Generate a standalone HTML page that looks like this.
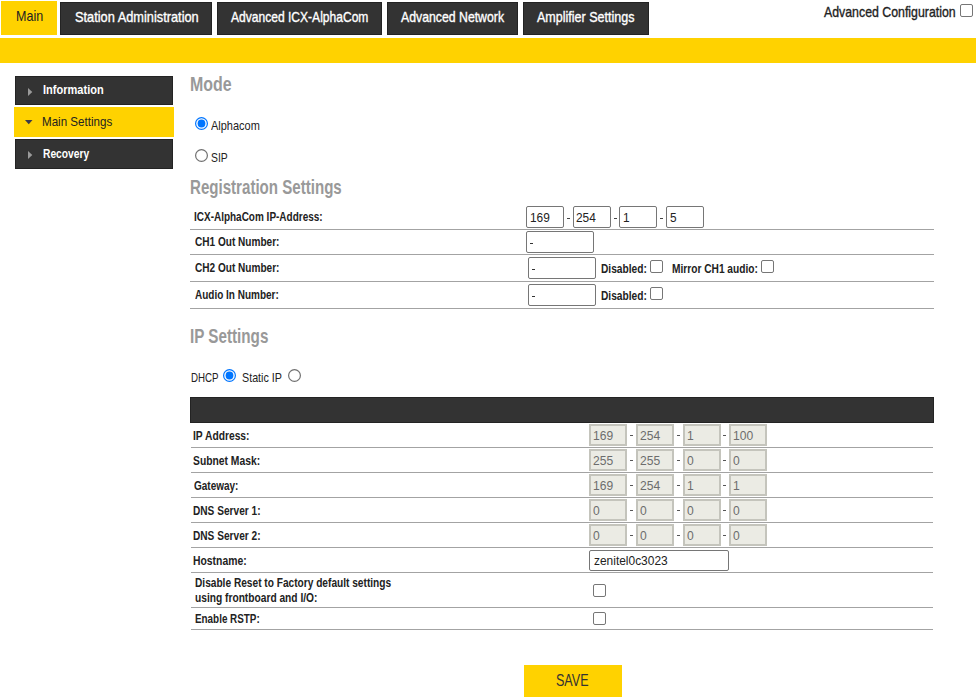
<!DOCTYPE html>
<html><head><meta charset="utf-8"><title>Main Settings</title>
<style>
*{box-sizing:border-box}
html,body{margin:0;padding:0;background:#fff;width:976px;height:700px;overflow:hidden;position:relative;font-family:"Liberation Sans",sans-serif;color:#222}
.a{position:absolute}
.t{position:absolute;white-space:nowrap;transform-origin:0 0;line-height:1;font-family:"Liberation Sans",sans-serif}
.inp{position:absolute;height:22px;border:1px solid #767676;border-radius:2px;background:#fff}
.dis{position:absolute;width:38px;height:22px;border:2px solid #c4c4bc;background:#ebebe4}
.cb{position:absolute;width:13px;height:13px;border:1px solid #767676;border-radius:2px;background:#fff}
</style></head><body>
<div class="a" style="left:1px;top:1px;width:56px;height:34px;background:#ffd200"></div>
<div class="a" style="left:60px;top:2px;width:152px;height:33px;background:#333;border:1px solid #232323"></div>
<div class="a" style="left:217px;top:2px;width:165px;height:33px;background:#333;border:1px solid #232323"></div>
<div class="a" style="left:387px;top:2px;width:131px;height:33px;background:#333;border:1px solid #232323"></div>
<div class="a" style="left:523px;top:2px;width:126px;height:33px;background:#333;border:1px solid #232323"></div>
<div id="t_main" class="t" style="left:15.54px;top:9.0px;font-size:14.5px;font-weight:400;color:#222;transform:scaleX(0.8633);">Main</div>
<div id="t_sa" class="t" style="left:74.5px;top:10.0px;font-size:14.5px;font-weight:400;color:#fff;-webkit-text-stroke:0.35px #fff;transform:scaleX(0.8821);">Station Administration</div>
<div id="t_icx" class="t" style="left:231.1px;top:9.8px;font-size:14.5px;font-weight:400;color:#fff;-webkit-text-stroke:0.35px #fff;transform:scaleX(0.8315);">Advanced ICX-AlphaCom</div>
<div id="t_net" class="t" style="left:401.1px;top:9.7px;font-size:14.5px;font-weight:400;color:#fff;-webkit-text-stroke:0.35px #fff;transform:scaleX(0.8467);">Advanced Network</div>
<div id="t_amp" class="t" style="left:537.4px;top:9.7px;font-size:14.5px;font-weight:400;color:#fff;-webkit-text-stroke:0.35px #fff;transform:scaleX(0.8646);">Amplifier Settings</div>
<div id="t_cfg" class="t" style="left:824.2px;top:4.8px;font-size:14.5px;font-weight:400;color:#222;-webkit-text-stroke:0.35px #222;transform:scaleX(0.8506);">Advanced Configuration</div>
<div class="cb" style="left:960px;top:4px"></div>
<div class="a" style="left:0px;top:38px;width:976px;height:25px;background:#ffd200"></div>
<div class="a" style="left:15px;top:76px;width:158px;height:29px;background:#333;border:1px solid #232323"></div>
<div class="a" style="left:14px;top:107px;width:160px;height:30px;background:#ffd200"></div>
<div class="a" style="left:15px;top:139px;width:158px;height:30px;background:#333;border:1px solid #232323"></div>
<svg class="a" style="left:27px;top:86.5px" width="7" height="10"><path d="M1 1 L5.3 5 L1 9 Z" fill="#9a9a9a"/></svg>
<svg class="a" style="left:27px;top:149.5px" width="7" height="10"><path d="M1 1 L5.3 5 L1 9 Z" fill="#9a9a9a"/></svg>
<svg class="a" style="left:24px;top:119px" width="10" height="7"><path d="M1 1 L8.5 1 L4.75 5.3 Z" fill="#3b3b4a"/></svg>
<div id="s_info" class="t" style="left:42.84px;top:84.0px;font-size:12.8px;font-weight:700;color:#fff;transform:scaleX(0.8623);">Information</div>
<div id="s_main" class="t" style="left:42.39px;top:115.7px;font-size:12.8px;font-weight:400;color:#222;transform:scaleX(0.9066);">Main Settings</div>
<div id="s_rec" class="t" style="left:43.1px;top:147.8px;font-size:12.8px;font-weight:700;color:#fff;transform:scaleX(0.8018);">Recovery</div>
<div id="h_mode" class="t" style="left:189.9px;top:75.2px;font-size:19.9px;font-weight:700;color:#999;transform:scaleX(0.802);">Mode</div>
<svg class="a" style="left:195px;top:117px" width="13" height="13" viewBox="0 0 13 13"><circle cx="6.5" cy="6.5" r="5.9" fill="#fff" stroke="#0075ff" stroke-width="1.2"/><circle cx="6.5" cy="6.5" r="3.9" fill="#0075ff"/></svg>
<div id="r_alpha" class="t" style="left:211.0px;top:119.9px;font-size:12.8px;font-weight:400;color:#222;transform:scaleX(0.8571);">Alphacom</div>
<svg class="a" style="left:195px;top:149px" width="13" height="13" viewBox="0 0 13 13"><circle cx="6.5" cy="6.5" r="5.9" fill="#fff" stroke="#707070" stroke-width="1.2"/></svg>
<div id="r_sip" class="t" style="left:210.79px;top:151.9px;font-size:12.8px;font-weight:400;color:#222;transform:scaleX(0.8105);">SIP</div>
<div id="h_reg" class="t" style="left:189.84px;top:178.3px;font-size:19.9px;font-weight:700;color:#999;transform:scaleX(0.7586);">Registration Settings</div>
<div class="a" style="left:190px;top:229px;width:744px;height:1px;background:#a3a3a3"></div>
<div class="a" style="left:190px;top:254px;width:744px;height:1px;background:#a3a3a3"></div>
<div class="a" style="left:190px;top:281px;width:744px;height:1px;background:#a3a3a3"></div>
<div class="a" style="left:190px;top:308px;width:744px;height:1px;background:#a3a3a3"></div>
<div id="l_icx" class="t" style="left:194.4px;top:211.0px;font-size:12.5px;font-weight:700;color:#222;transform:scaleX(0.7981);">ICX-AlphaCom IP-Address:</div>
<div id="l_ch1" class="t" style="left:195.2px;top:236.2px;font-size:12.5px;font-weight:700;color:#222;transform:scaleX(0.8048);">CH1 Out Number:</div>
<div id="l_ch2" class="t" style="left:195.2px;top:261.9px;font-size:12.5px;font-weight:700;color:#222;transform:scaleX(0.8048);">CH2 Out Number:</div>
<div id="l_aud" class="t" style="left:195.2px;top:289.3px;font-size:12.5px;font-weight:700;color:#222;transform:scaleX(0.799);">Audio In Number:</div>
<div id="l_dis1" class="t" style="left:601.19px;top:262.6px;font-size:12.5px;font-weight:700;color:#222;transform:scaleX(0.8148);">Disabled:</div>
<div id="l_mir" class="t" style="left:671.59px;top:262.8px;font-size:12.5px;font-weight:700;color:#222;transform:scaleX(0.8135);">Mirror CH1 audio:</div>
<div id="l_dis2" class="t" style="left:601.19px;top:289.7px;font-size:12.5px;font-weight:700;color:#222;transform:scaleX(0.8148);">Disabled:</div>
<div class="inp" style="left:526px;top:206px;width:38px"></div>
<div class="inp" style="left:573px;top:206px;width:38px"></div>
<div class="inp" style="left:619px;top:206px;width:38px"></div>
<div class="inp" style="left:666px;top:206px;width:38px"></div>
<div class="inp" style="left:526px;top:231px;width:68px"></div>
<div class="inp" style="left:528px;top:257px;width:68px"></div>
<div class="inp" style="left:528px;top:284px;width:68px"></div>
<div class="a" style="left:567px;top:218px;width:3px;height:1px;background:#444"></div>
<div class="a" style="left:614px;top:218px;width:3px;height:1px;background:#444"></div>
<div class="a" style="left:660px;top:218px;width:3px;height:1px;background:#444"></div>
<div class="t" style="left:529.9px;top:212px;font-size:12.5px;color:#222;transform:scaleX(0.95);">169</div>
<div class="t" style="left:576.2px;top:212px;font-size:12.5px;color:#222;transform:scaleX(0.95);">254</div>
<div class="t" style="left:623.1px;top:212px;font-size:12.5px;color:#222;transform:scaleX(0.95);">1</div>
<div class="t" style="left:670.2px;top:212px;font-size:12.5px;color:#222;transform:scaleX(0.95);">5</div>
<div class="a" style="left:530px;top:243px;width:3px;height:1px;background:#333"></div>
<div class="a" style="left:532px;top:269px;width:3px;height:1px;background:#333"></div>
<div class="a" style="left:532px;top:296px;width:3px;height:1px;background:#333"></div>
<div class="cb" style="left:650px;top:260px"></div>
<div class="cb" style="left:761px;top:260px"></div>
<div class="cb" style="left:650px;top:287px"></div>
<div id="h_ip" class="t" style="left:189.93px;top:327.2px;font-size:19.9px;font-weight:700;color:#999;transform:scaleX(0.7653);">IP Settings</div>
<div id="r_dhcp" class="t" style="left:190.64px;top:371.7px;font-size:12.8px;font-weight:400;color:#222;transform:scaleX(0.76);">DHCP</div>
<svg class="a" style="left:223px;top:369px" width="13" height="13" viewBox="0 0 13 13"><circle cx="6.5" cy="6.5" r="5.9" fill="#fff" stroke="#0075ff" stroke-width="1.2"/><circle cx="6.5" cy="6.5" r="3.9" fill="#0075ff"/></svg>
<div id="r_static" class="t" style="left:242.46px;top:371.7px;font-size:12.8px;font-weight:400;color:#222;transform:scaleX(0.8391);">Static IP</div>
<svg class="a" style="left:288px;top:369px" width="13" height="13" viewBox="0 0 13 13"><circle cx="6.5" cy="6.5" r="5.9" fill="#fff" stroke="#707070" stroke-width="1.2"/></svg>
<div class="a" style="left:190px;top:397px;width:744px;height:26px;background:#333;border:1px solid #232323"></div>
<div class="a" style="left:191px;top:447px;width:742px;height:1px;background:#a3a3a3"></div>
<div class="a" style="left:191px;top:472px;width:742px;height:1px;background:#a3a3a3"></div>
<div class="a" style="left:191px;top:497px;width:742px;height:1px;background:#a3a3a3"></div>
<div class="a" style="left:191px;top:522px;width:742px;height:1px;background:#a3a3a3"></div>
<div class="a" style="left:191px;top:547px;width:742px;height:1px;background:#a3a3a3"></div>
<div class="a" style="left:191px;top:572px;width:742px;height:1px;background:#a3a3a3"></div>
<div class="a" style="left:191px;top:607px;width:742px;height:1px;background:#a3a3a3"></div>
<div class="a" style="left:191px;top:629px;width:742px;height:1px;background:#a3a3a3"></div>
<div id="l_ipa" class="t" style="left:192.88px;top:430.2px;font-size:12.5px;font-weight:700;color:#222;transform:scaleX(0.8209);">IP Address:</div>
<div id="l_sub" class="t" style="left:192.87px;top:455.0px;font-size:12.5px;font-weight:700;color:#222;transform:scaleX(0.8253);">Subnet Mask:</div>
<div id="l_gw" class="t" style="left:193.7px;top:480.0px;font-size:12.5px;font-weight:700;color:#222;transform:scaleX(0.7982);">Gateway:</div>
<div id="l_dns1" class="t" style="left:192.89px;top:505.0px;font-size:12.5px;font-weight:700;color:#222;transform:scaleX(0.8099);">DNS Server 1:</div>
<div id="l_dns2" class="t" style="left:192.89px;top:530.0px;font-size:12.5px;font-weight:700;color:#222;transform:scaleX(0.8099);">DNS Server 2:</div>
<div id="l_host" class="t" style="left:192.87px;top:555.0px;font-size:12.5px;font-weight:700;color:#222;transform:scaleX(0.8302);">Hostname:</div>
<div id="l_disa" class="t" style="left:195.29px;top:576.8px;font-size:12.5px;font-weight:700;color:#222;transform:scaleX(0.8113);">Disable Reset to Factory default settings</div>
<div id="l_disb" class="t" style="left:195.28px;top:592.0px;font-size:12.5px;font-weight:700;color:#222;transform:scaleX(0.8162);">using frontboard and I/O:</div>
<div id="l_rstp" class="t" style="left:195.31px;top:613.0px;font-size:12.5px;font-weight:700;color:#222;transform:scaleX(0.79);">Enable RSTP:</div>
<div class="dis" style="left:589px;top:424px"></div>
<div class="t" style="left:592.5px;top:429px;font-size:13px;color:#6d6d6d;transform:scaleX(0.93);">169</div>
<div class="dis" style="left:636px;top:424px"></div>
<div class="t" style="left:639.5px;top:429px;font-size:13px;color:#6d6d6d;transform:scaleX(0.93);">254</div>
<div class="dis" style="left:683px;top:424px"></div>
<div class="t" style="left:686.5px;top:429px;font-size:13px;color:#6d6d6d;transform:scaleX(0.93);">1</div>
<div class="dis" style="left:729px;top:424px"></div>
<div class="t" style="left:732.5px;top:429px;font-size:13px;color:#6d6d6d;transform:scaleX(0.93);">100</div>
<div class="a" style="left:630px;top:435px;width:3px;height:1px;background:#555"></div>
<div class="a" style="left:677px;top:435px;width:3px;height:1px;background:#555"></div>
<div class="a" style="left:723px;top:435px;width:3px;height:1px;background:#555"></div>
<div class="dis" style="left:589px;top:449px"></div>
<div class="t" style="left:592.5px;top:454px;font-size:13px;color:#6d6d6d;transform:scaleX(0.93);">255</div>
<div class="dis" style="left:636px;top:449px"></div>
<div class="t" style="left:639.5px;top:454px;font-size:13px;color:#6d6d6d;transform:scaleX(0.93);">255</div>
<div class="dis" style="left:683px;top:449px"></div>
<div class="t" style="left:686.5px;top:454px;font-size:13px;color:#6d6d6d;transform:scaleX(0.93);">0</div>
<div class="dis" style="left:729px;top:449px"></div>
<div class="t" style="left:732.5px;top:454px;font-size:13px;color:#6d6d6d;transform:scaleX(0.93);">0</div>
<div class="a" style="left:630px;top:460px;width:3px;height:1px;background:#555"></div>
<div class="a" style="left:677px;top:460px;width:3px;height:1px;background:#555"></div>
<div class="a" style="left:723px;top:460px;width:3px;height:1px;background:#555"></div>
<div class="dis" style="left:589px;top:474px"></div>
<div class="t" style="left:592.5px;top:479px;font-size:13px;color:#6d6d6d;transform:scaleX(0.93);">169</div>
<div class="dis" style="left:636px;top:474px"></div>
<div class="t" style="left:639.5px;top:479px;font-size:13px;color:#6d6d6d;transform:scaleX(0.93);">254</div>
<div class="dis" style="left:683px;top:474px"></div>
<div class="t" style="left:686.5px;top:479px;font-size:13px;color:#6d6d6d;transform:scaleX(0.93);">1</div>
<div class="dis" style="left:729px;top:474px"></div>
<div class="t" style="left:732.5px;top:479px;font-size:13px;color:#6d6d6d;transform:scaleX(0.93);">1</div>
<div class="a" style="left:630px;top:485px;width:3px;height:1px;background:#555"></div>
<div class="a" style="left:677px;top:485px;width:3px;height:1px;background:#555"></div>
<div class="a" style="left:723px;top:485px;width:3px;height:1px;background:#555"></div>
<div class="dis" style="left:589px;top:499px"></div>
<div class="t" style="left:592.5px;top:504px;font-size:13px;color:#6d6d6d;transform:scaleX(0.93);">0</div>
<div class="dis" style="left:636px;top:499px"></div>
<div class="t" style="left:639.5px;top:504px;font-size:13px;color:#6d6d6d;transform:scaleX(0.93);">0</div>
<div class="dis" style="left:683px;top:499px"></div>
<div class="t" style="left:686.5px;top:504px;font-size:13px;color:#6d6d6d;transform:scaleX(0.93);">0</div>
<div class="dis" style="left:729px;top:499px"></div>
<div class="t" style="left:732.5px;top:504px;font-size:13px;color:#6d6d6d;transform:scaleX(0.93);">0</div>
<div class="a" style="left:630px;top:510px;width:3px;height:1px;background:#555"></div>
<div class="a" style="left:677px;top:510px;width:3px;height:1px;background:#555"></div>
<div class="a" style="left:723px;top:510px;width:3px;height:1px;background:#555"></div>
<div class="dis" style="left:589px;top:524px"></div>
<div class="t" style="left:592.5px;top:529px;font-size:13px;color:#6d6d6d;transform:scaleX(0.93);">0</div>
<div class="dis" style="left:636px;top:524px"></div>
<div class="t" style="left:639.5px;top:529px;font-size:13px;color:#6d6d6d;transform:scaleX(0.93);">0</div>
<div class="dis" style="left:683px;top:524px"></div>
<div class="t" style="left:686.5px;top:529px;font-size:13px;color:#6d6d6d;transform:scaleX(0.93);">0</div>
<div class="dis" style="left:729px;top:524px"></div>
<div class="t" style="left:732.5px;top:529px;font-size:13px;color:#6d6d6d;transform:scaleX(0.93);">0</div>
<div class="a" style="left:630px;top:535px;width:3px;height:1px;background:#555"></div>
<div class="a" style="left:677px;top:535px;width:3px;height:1px;background:#555"></div>
<div class="a" style="left:723px;top:535px;width:3px;height:1px;background:#555"></div>
<div class="inp" style="left:589px;top:550px;width:140px;height:21px"></div>
<div class="t" style="left:593.9px;top:554.7px;font-size:12.5px;color:#222;transform:scaleX(0.955);">zenitel0c3023</div>
<div class="cb" style="left:593px;top:584px"></div>
<div class="cb" style="left:593px;top:612px"></div>
<div class="a" style="left:524px;top:665px;width:98px;height:32px;background:#ffd200"></div>
<div id="save" class="t" style="left:556.12px;top:671.7px;font-size:16.2px;font-weight:400;color:#333;transform:scaleX(0.7756);">SAVE</div>
</body></html>
